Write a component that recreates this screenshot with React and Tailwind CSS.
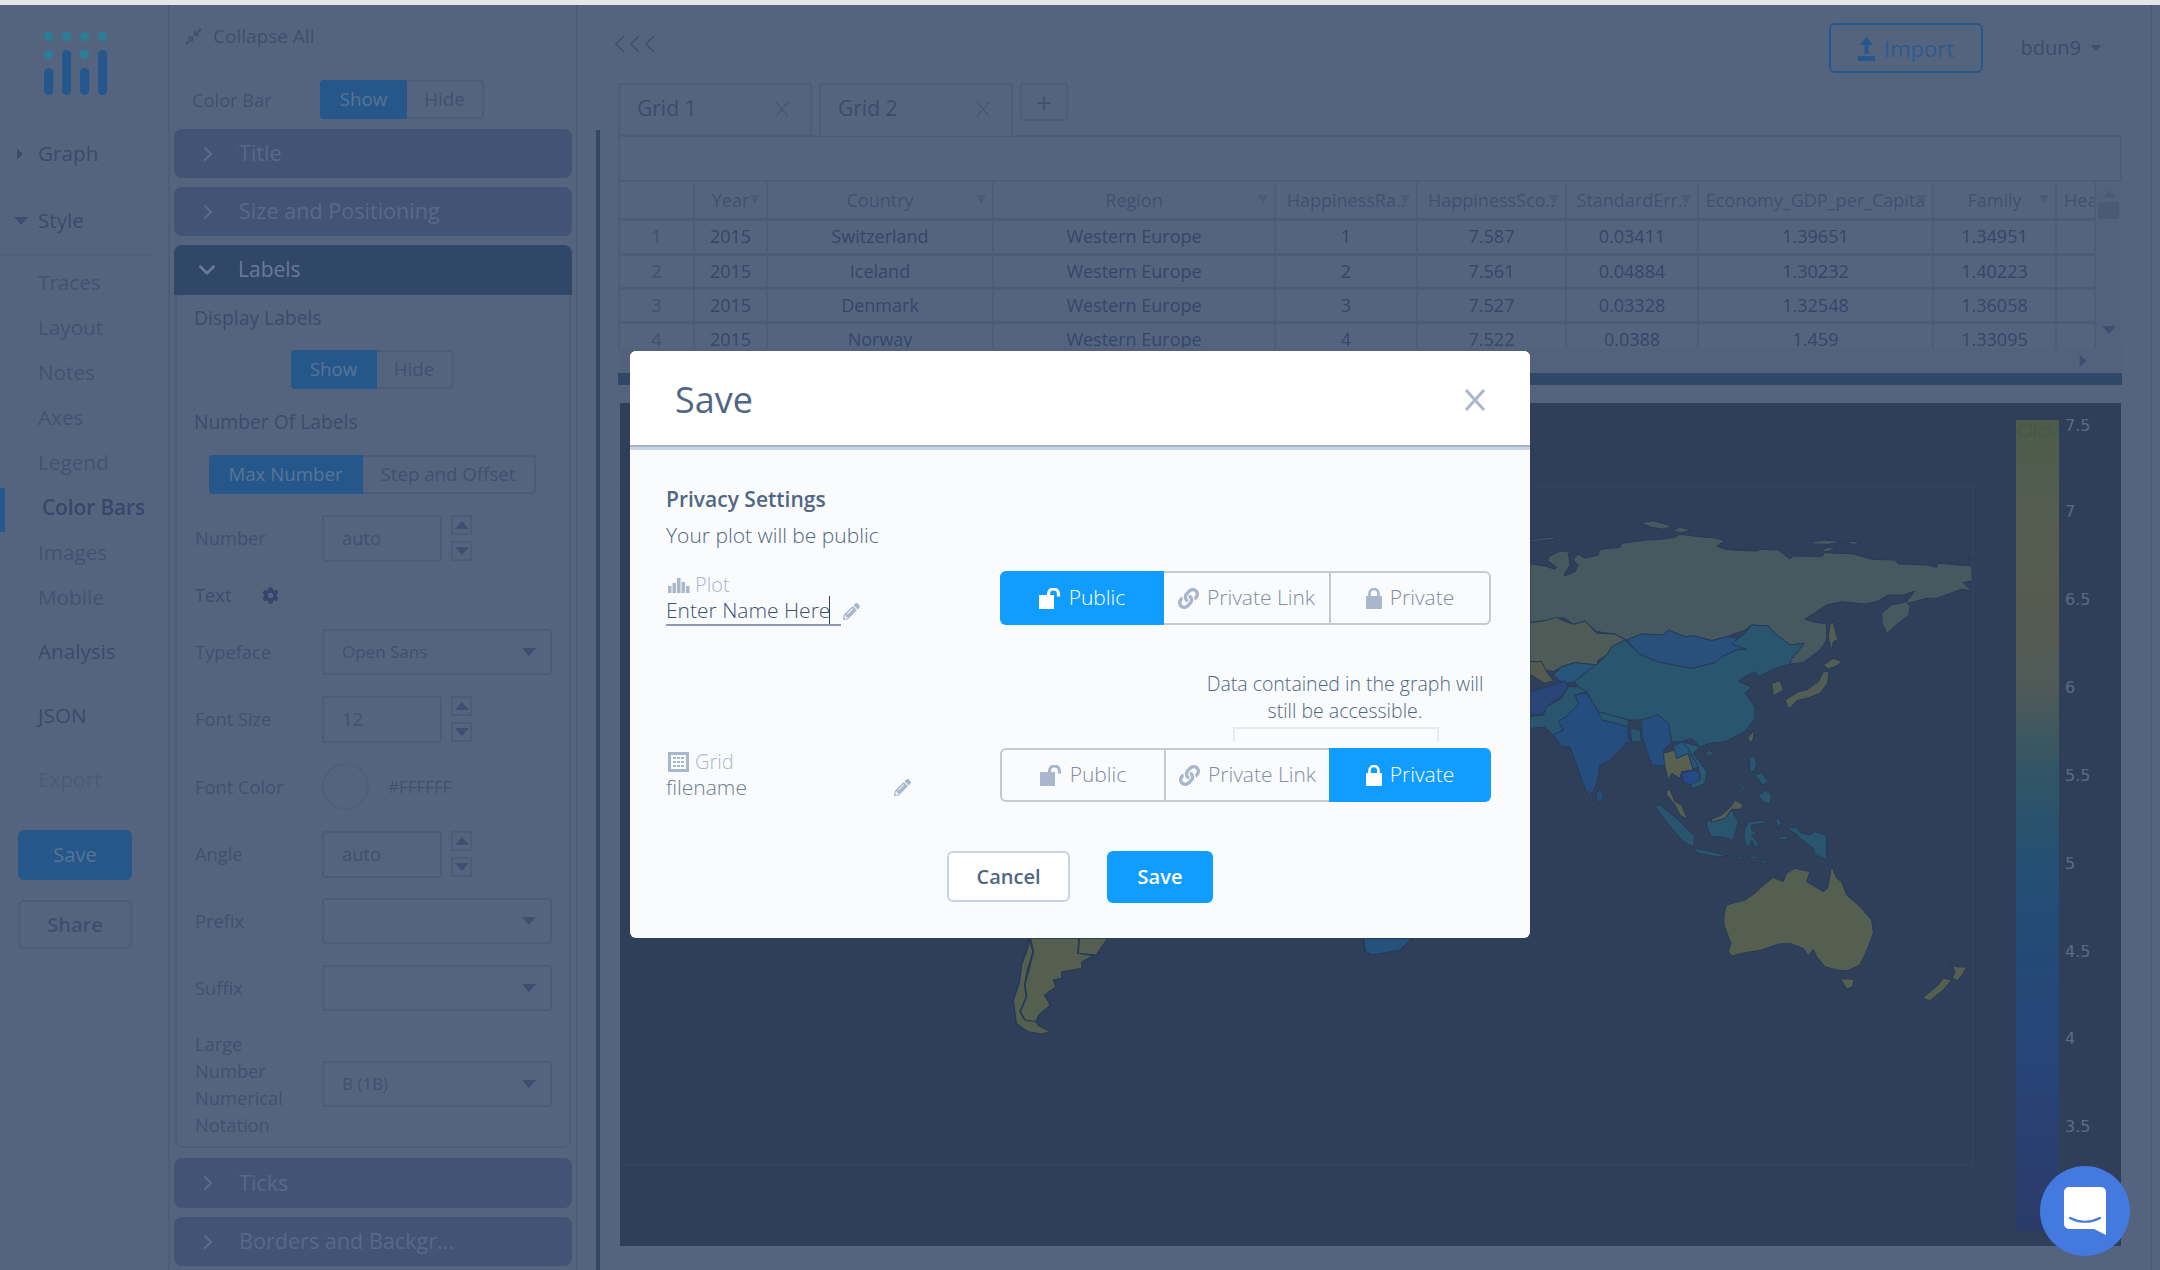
import React from "react";
import { ChevronRight, ChevronDown } from "lucide-react";
import { FaCog, FaLink, FaPencilAlt, FaCompressAlt } from "react-icons/fa";

// table data
const columns = ["", "Year", "Country", "Region", "HappinessRa..", "HappinessSco..", "StandardErr..", "Economy_GDP_per_Capita", "Family", "Hea"];
const rows = [
  ["1", "2015", "Switzerland", "Western Europe", "1", "7.587", "0.03411", "1.39651", "1.34951", ""],
  ["2", "2015", "Iceland", "Western Europe", "2", "7.561", "0.04884", "1.30232", "1.40223", ""],
  ["3", "2015", "Denmark", "Western Europe", "3", "7.527", "0.03328", "1.32548", "1.36058", ""],
  ["4", "2015", "Norway", "Western Europe", "4", "7.522", "0.0388", "1.459", "1.33095", ""],
];
const gridCols = "grid grid-cols-[75px_73px_226px_282px_142px_149px_132px_235px_123px_39px]";

const Caret = ({ dir = "down", className = "" }) => (
  <svg width="14" height="8" viewBox="0 0 14 8" preserveAspectRatio="none" className={className}>
    <path d={dir === "down" ? "M0 0h14L7 8z" : "M0 8h14L7 0z"} fill="currentColor" />
  </svg>
);

const Logo = () => (
  <svg width="64" height="64" viewBox="0 0 64 64">
    {[4.6, 22.6, 40.6, 58.6].map((x) => (
      <circle key={x} cx={x} cy="4.6" r="4.6" fill="#2a7f98" />
    ))}
    <circle cx="4.6" cy="22.6" r="4.6" fill="#2a7f98" />
    <circle cx="40.6" cy="22.6" r="4.6" fill="#2a7f98" />
    <rect x="0" y="36" width="9.2" height="27" rx="4.6" fill="#24578d" />
    <rect x="18" y="18" width="9.2" height="45" rx="4.6" fill="#24578d" />
    <rect x="36" y="36" width="9.2" height="27" rx="4.6" fill="#24578d" />
    <rect x="54" y="18" width="9.2" height="45" rx="4.6" fill="#24578d" />
  </svg>
);

const NavSub = ({ label, active }) => (
  <div className="relative flex h-[45px] items-center">
    {active && <div className="absolute left-0 top-[3px] h-[44px] w-[5px] bg-[#24578d]" />}
    <span className={active ? "pl-[42px] font-semibold text-[#34486a]" : "pl-[38px] text-[#425274]"}>{label}</span>
  </div>
);

const Sidebar = () => (
  <div className="w-[170px] shrink-0 border-r-2 border-[#4d5c79] text-[20.7px]">
    <div className="h-[116px] pl-[44px] pt-[27px]">
      <Logo />
    </div>
    <div className="flex h-[66px] items-center text-[#384b6d]">
      <Caret className="ml-[13px] mr-[11px] -rotate-90 scale-75 text-[#3a4d6e]" />
      Graph
    </div>
    <div className="flex h-[67px] items-center text-[#384b6d]">
      <Caret className="ml-[14px] mr-[10px] text-[#3a4d6e]" />
      Style
    </div>
    <div className="mb-[4px] h-[2px] w-[150px] bg-[#4f5e7b]" />
    {["Traces", "Layout", "Notes", "Axes", "Legend"].map((n) => (
      <NavSub key={n} label={n} />
    ))}
    <NavSub label="Color Bars" active />
    <NavSub label="Images" />
    <NavSub label="Mobile" />
    <div className="flex h-[64px] items-center pl-[38px] text-[#384b6d]">Analysis</div>
    <div className="flex h-[64px] items-center pl-[38px] text-[#384b6d]">JSON</div>
    <div className="flex h-[64px] items-center pl-[38px] text-[#4a5a78]">Export</div>
    <div className="ml-[18px] mt-[18px] flex h-[50px] w-[114px] items-center justify-center rounded-[6px] bg-[#25578a] text-[20px] text-[#5a7396]">Save</div>
    <div className="ml-[18px] mt-[20px] flex h-[49px] w-[114px] items-center justify-center rounded-[6px] border-2 border-[#4c5b79] text-[20px] font-semibold text-[#3d4f70]">Share</div>
  </div>
);

const Toggle = ({ options, activeIdx = 0, widths }) => (
  <div className="flex h-[39px] text-[18.7px]">
    {options.map((o, i) => (
      <div
        key={o}
        className={
          i === activeIdx
            ? "flex items-center justify-center rounded-l-[4px] bg-[#25578a] text-[#5a7396]"
            : "flex items-center justify-center rounded-r-[4px] border-2 border-l-0 border-[#4c5b79] text-[#3f5072]"
        }
        style={{ width: widths[i] }}
      >
        {o}
      </div>
    ))}
  </div>
);

const Bar = ({ label, className = "" }) => (
  <div className={`flex items-center rounded-[8px] bg-[#415475] text-[21.6px] text-[#586988] ${className}`}>
    <ChevronRight size={24} strokeWidth={2} className="ml-[22px] mr-[19px] text-[#5c6d8a]" />
    {label}
  </div>
);

const Row = ({ h, label, children }) => (
  <div className={`flex items-center border-b border-[#51607c] ${h}`}>
    <div className="w-[145px] shrink-0 pl-[18px] text-[#3f5072]">{label}</div>
    {children}
  </div>
);

const NumberInput = ({ value }) => (
  <>
    <div className="flex h-[47px] w-[120px] items-center rounded-[3px] border-2 border-[#4c5b79] pl-[18px] text-[#3f5072]">{value}</div>
    <div className="ml-[9px] flex flex-col gap-[6px]">
      <div className="flex h-[20px] w-[21px] items-center justify-center border-2 border-[#4c5b79] text-[#3d4f70]">
        <Caret dir="up" />
      </div>
      <div className="flex h-[20px] w-[21px] items-center justify-center border-2 border-[#4c5b79] text-[#3d4f70]">
        <Caret />
      </div>
    </div>
  </>
);

const Select = ({ value }) => (
  <div className="flex h-[46px] w-[230px] items-center justify-between rounded-[4px] border-2 border-[#4c5b79] pl-[18px] pr-[14px] text-[17px] text-[#3f5072]">
    <span>{value}</span>
    <Caret className="text-[#3d4f70]" />
  </div>
);

const StylePanel = () => (
  <div className="h-[1265px] w-[408px] shrink-0 overflow-hidden border-r-2 border-[#4d5c79] pl-[4px] pr-[4px] text-[18.3px]">
    <div className="flex h-[62px] items-center pl-[10px] text-[#3d4f70]">
      <FaCompressAlt size={19} className="mr-[10px] text-[#435374]" />
      <span className="text-[19px]">Collapse All</span>
    </div>
    <div className="mt-[13px] flex h-[39px] items-center">
      <span className="w-[146px] pl-[18px] text-[#3f5072]">Color Bar</span>
      <Toggle options={["Show", "Hide"]} widths={[87, 77]} />
    </div>
    <Bar label="Title" className="mt-[10px] h-[49px]" />
    <Bar label="Size and Positioning" className="mt-[9px] h-[49px]" />
    <div className="mt-[9px] flex h-[50px] items-center rounded-t-[8px] bg-[#314768] text-[21px] text-[#687a98]">
      <ChevronDown size={26} strokeWidth={2.5} className="ml-[20px] mr-[18px] text-[#687a98]" />
      Labels
    </div>
    <div className="ml-[1px] mr-[1px] h-[853px] rounded-b-[8px] border-x-2 border-b-2 border-[#4d5c79]">
      <div className="flex h-[46px] items-center pl-[17px] text-[19.3px] text-[#3a4c6e]">Display Labels</div>
      <div className="mt-[9px] flex justify-center pr-[2px]">
        <Toggle options={["Show", "Hide"]} widths={[86, 77]} />
      </div>
      <div className="mt-[11px] flex h-[44px] items-center pl-[17px] text-[19.3px] text-[#3a4c6e]">Number Of Labels</div>
      <div className="mt-[11px] flex justify-center pr-[2px]">
        <Toggle options={["Max Number", "Step and Offset"]} widths={[154, 173]} />
      </div>
      <div className="mt-[12px]">
        <Row h="h-[65px]" label="Number"><NumberInput value="auto" /></Row>
        <div className="flex h-[48px] items-center pl-[18px] text-[#3a4c6e]">
          Text
          <FaCog size={17} className="ml-[31px] text-[#34466a]" />
        </div>
        <Row h="h-[67px]" label="Typeface"><Select value="Open Sans" /></Row>
        <Row h="h-[67px]" label="Font Size"><NumberInput value="12" /></Row>
        <Row h="h-[68px]" label="Font Color">
          <div className="h-[47px] w-[47px] rounded-full border-2 border-[#4f5e7b]" />
          <span className="ml-[19px] text-[17px] text-[#3f5072]">#FFFFFF</span>
        </Row>
        <Row h="h-[67px]" label="Angle"><NumberInput value="auto" /></Row>
        <Row h="h-[67px]" label="Prefix"><Select value="" /></Row>
        <Row h="h-[66px]" label="Suffix"><Select value="" /></Row>
        <div className="flex h-[125px] items-center text-[#3f5072]">
          <div className="w-[145px] shrink-0 pl-[18px] leading-[27px]">
            Large
            <br />
            Number
            <br />
            Numerical
            <br />
            Notation
          </div>
          <Select value="B (1B)" />
        </div>
      </div>
    </div>
    <Bar label="Ticks" className="mt-[10px] h-[50px]" />
    <Bar label="Borders and Backgr..." className="mt-[9px] h-[49px]" />
  </div>
);

const Tab = ({ label, active }) => (
  <div className={`mr-[7px] flex h-[53px] w-[194px] items-center justify-between rounded-t-[3px] border-2 border-[#4d5c79] pb-[2px] pl-[17px] pr-[21px] text-[21px] text-[#3a4c6e] ${active ? "border-b-[#55647e]" : ""}`}>
    <span>{label}</span>
    <svg width="14" height="16" viewBox="0 0 14 16" stroke="#47577a" strokeWidth="1.6" fill="none">
      <path d="M1 1l12 14M13 1L1 15" />
    </svg>
  </div>
);

const DataTable = () => (
  <div className="flex h-[166px] border-l-2 border-[#4d5c79] text-[18px] text-[#34466a]">
    <div className="h-full w-[1476px] overflow-hidden">
      <div className={`${gridCols} h-[39px] border-b-[3px] border-[#4c5b78]`}>
        {columns.map((c, i) => (
          <div key={i} className={`relative flex items-center overflow-hidden whitespace-nowrap border-r-2 border-[#4d5c79] text-[#3f5072] ${i === 9 ? "justify-start pl-[7px]" : "justify-center"}`}>
            {c}
            {i > 0 && i < 9 && <Caret className="absolute right-[6px] top-[13px] h-[9px] w-[10px] text-[#4a5a78]" />}
          </div>
        ))}
      </div>
      {rows.map((r, ri) => (
        <div key={r[0]} className={`${gridCols} ${ri === 0 ? "h-[35px] pb-[1px]" : "h-[34px]"} border-b-[3px] border-[#4c5b78]`}>
          {r.map((v, i) => (
            <div key={i} className={`flex items-center justify-center whitespace-nowrap border-r-2 border-[#4d5c79] ${i === 0 ? "text-[#3f5072]" : ""}`}>
              {v}
            </div>
          ))}
        </div>
      ))}
    </div>
    <div className="flex w-[25px] flex-col items-center bg-[#53627c] text-[#3d4f70]">
      <Caret dir="up" className="mt-[8px] text-[#4a5a78]" />
      <div className="mt-[4px] h-[17px] w-[21px] bg-[#4a5a75]" />
      <Caret className="mt-[107px]" />
    </div>
  </div>
);

// land shapes traced in crop coordinates, 3 units = 1 page pixel
const RUSSIA = "#47595f", KAZ = "#4f5b56", TEAL = "#29566e", BLUE = "#254e7e", OLIVE = "#555f50";

const asia = [
  [RUSSIA, "M15,222 L60,228 L90,238 L95,232 L68,212 L72,200 L105,183 L130,186 L140,195 L155,190 L165,195 L180,205 L220,195 L225,178 L285,172 L290,160 L365,150 L410,148 L450,142 L465,133 L520,140 L565,143 L600,152 L575,168 L600,178 L655,182 L700,183 L705,178 L760,180 L795,207 L805,198 L890,200 L900,188 L985,192 L1040,208 L1110,210 L1120,222 L1205,225 L1235,232 L1240,220 L1340,228 L1342,272 L1315,278 L1340,303 L1310,298 L1235,325 L1205,325 L1150,340 L1145,335 L1170,303 L1135,315 L1090,315 L1055,335 L1020,342 L950,335 L905,345 L840,388 L860,395 L905,402 L905,450 L885,480 L835,517 L795,522 L798,510 L838,460 L795,465 L750,430 L730,408 L680,405 L660,420 L605,440 L560,452 L510,438 L480,440 L430,420 L415,435 L350,432 L305,450 L270,432 L215,425 L180,393 L145,403 L115,382 L60,392 L15,398 Z"],
  [RUSSIA, "M1070,370 L1100,345 L1145,335 L1155,350 L1152,375 L1125,395 L1085,430 L1072,400 Z"],
  ["#2f3f5a", "M118,258 L150,245 L160,225 L145,210 L160,190 L130,190 L135,225 L120,250 Z"],
  [RUSSIA, "M345,98 L385,92 L440,108 L420,118 L380,112 Z"],
  [RUSSIA, "M440,122 L465,112 L500,120 L470,128 Z"],
  [RUSSIA, "M15,150 L90,140 L85,148 L15,155 Z"],
  [RUSSIA, "M860,155 L900,150 L950,155 L910,163 L870,162 Z"],
  [RUSSIA, "M960,157 L985,154 L1012,160 L985,163 Z"],
  [RUSSIA, "M890,180 L910,172 L935,180 L900,185 Z"],
  [RUSSIA, "M1330,205 L1345,200 L1345,208 Z"],
  [KAZ, "M15,398 L60,392 L95,382 L115,392 L145,403 L180,393 L215,430 L270,432 L300,450 L260,470 L245,495 L220,510 L215,525 L150,518 L110,530 L85,545 L60,540 L50,515 L15,515 Z"],
  ["#545c50", "M15,515 L50,515 L65,545 L85,572 L60,580 L15,553 Z"],
  ["#27567a", "M85,555 L110,530 L150,518 L215,525 L185,545 L150,575 L125,580 L100,570 Z"],
  ["#2a4678", "M15,605 L70,590 L120,572 L130,590 L100,625 L65,650 L55,672 L15,675 Z"],
  [TEAL, "M15,680 L55,675 L65,650 L110,625 L130,590 L160,590 L185,605 L150,615 L160,640 L130,675 L100,695 L115,720 L85,735 L60,712 L15,715 Z"],
  [TEAL, "M150,575 L185,545 L220,520 L245,495 L260,470 L300,450 L340,490 L395,515 L500,535 L570,518 L590,500 L640,478 L665,478 L620,462 L640,445 L660,430 L680,405 L730,408 L750,430 L795,465 L838,460 L798,510 L795,522 L750,535 L700,560 L690,545 L650,565 L640,575 L680,590 L660,610 L690,650 L690,685 L660,725 L600,755 L555,760 L525,770 L500,745 L470,755 L440,755 L430,700 L400,675 L355,690 L310,690 L220,665 L205,640 L185,605 L160,590 Z"],
  ["#28507a", "M305,450 L350,432 L415,435 L430,420 L480,440 L510,438 L560,452 L605,440 L640,445 L620,462 L665,478 L640,478 L590,500 L570,518 L500,535 L395,515 L340,490 Z"],
  [BLUE, "M150,615 L185,610 L205,640 L220,665 L230,680 L310,710 L310,750 L340,755 L350,730 L360,745 L300,760 L295,770 L255,810 L225,825 L215,880 L205,905 L190,915 L180,895 L135,770 L110,770 L85,735 L115,720 L100,695 L130,675 L160,640 Z"],
  [TEAL, "M220,665 L310,690 L310,710 L230,690 Z"],
  [TEAL, "M315,715 L345,720 L350,755 L320,755 Z"],
  [BLUE, "M350,690 L400,675 L430,700 L440,755 L415,780 L425,830 L380,825 L360,765 L350,730 Z"],
  ["#58604f", "M415,790 L450,780 L455,805 L490,790 L505,840 L470,845 L465,865 L440,850 L430,870 L420,830 Z"],
  ["#27567a", "M445,770 L470,755 L490,775 L520,830 L505,838 L490,790 L455,805 Z"],
  ["#2a5a72", "M470,755 L525,770 L505,790 L545,845 L540,880 L500,898 L498,880 L525,865 L520,830 L490,775 Z"],
  ["#254a85", "M470,850 L505,840 L525,850 L525,870 L495,885 L475,875 Z"],
  [TEAL, "M540,790 L552,780 L566,788 L552,800 Z"],
  [OLIVE, "M675,735 L688,722 L685,745 L678,760 L668,745 Z"],
  ["#525d53", "M740,580 L765,572 L775,600 L745,618 Z"],
  ["#525d53", "M780,630 L820,605 L845,600 L880,575 L895,545 L912,545 L908,580 L885,610 L845,625 L815,632 L800,650 L790,655 Z"],
  ["#525d53", "M895,525 L925,505 L952,515 L930,530 L910,537 Z"],
  ["#525d53", "M915,405 L925,395 L938,450 L925,455 L920,485 L910,440 Z"],
];

const oceania = [
  [BLUE, "M214,165 L225,145 L236,170 L228,187 L216,185 Z"],
  [TEAL, "M672,52 L688,48 L695,70 L688,95 L675,95 Z"],
  [TEAL, "M700,165 L725,150 L740,165 L735,190 L715,188 Z"],
  [TEAL, "M690,105 L710,98 L730,125 L712,135 Z"],
  [TEAL, "M638,160 L662,128 L660,140 L645,160 Z"],
  [OLIVE, "M425,150 L435,150 L450,185 L470,195 L487,238 L465,225 L450,195 L425,165 Z"],
  [TEAL, "M388,195 L405,195 L460,240 L510,290 L505,322 L470,300 L420,240 Z"],
  [TEAL, "M505,325 L540,330 L615,350 L575,350 L520,340 Z"],
  [TEAL, "M630,350 L655,348 L645,358 Z"],
  [TEAL, "M660,352 L700,347 L690,357 Z"],
  [TEAL, "M655,362 L678,368 L668,372 Z"],
  [TEAL, "M705,368 L725,357 L718,372 Z"],
  [TEAL, "M545,240 L560,245 L600,235 L620,210 L640,245 L625,300 L595,292 L560,290 L545,260 Z"],
  [OLIVE, "M555,240 L590,225 L618,200 L630,180 L655,195 L645,208 L620,208 L600,235 L565,245 Z"],
  [TEAL, "M660,265 L670,245 L725,240 L715,250 L680,255 L680,270 L700,285 L680,285 L703,315 L690,320 L680,300 L672,318 L662,318 L657,285 Z"],
  [TEAL, "M752,240 L762,232 L768,250 L758,265 Z"],
  [TEAL, "M785,265 L815,262 L828,280 L855,285 L870,275 L905,285 L905,358 L870,345 L865,325 L825,295 L815,283 Z"],
  [TEAL, "M735,292 L750,290 L748,298 Z"],
  [TEAL, "M755,292 L785,288 L790,298 L760,298 Z"],
  [TEAL, "M825,325 L835,318 L832,335 Z"],
  [OLIVE, "M597,525 L605,495 L660,480 L690,460 L710,440 L745,412 L775,425 L785,400 L810,385 L855,395 L845,425 L895,455 L908,445 L920,378 L935,415 L950,425 L965,465 L1000,495 L1040,540 L1045,580 L1030,620 L1005,675 L965,693 L935,690 L900,680 L875,650 L865,628 L850,648 L835,625 L795,610 L760,612 L710,630 L650,640 L620,648 L610,635 L618,610 L597,555 Z"],
  [OLIVE, "M947,716 L988,718 L983,740 L965,748 Z"],
  [OLIVE, "M1192,775 L1240,735 L1255,715 L1280,720 L1255,750 L1215,782 Z"],
  [OLIVE, "M1260,645 L1290,680 L1325,682 L1315,700 L1298,722 L1282,715 L1290,695 L1282,675 Z"],
];

const southAmerica = [
  [OLIVE, "M715,55 L800,55 L798,100 L825,108 L805,125 L805,145 L770,155 L770,175 L755,180 L760,200 L740,225 L750,255 L730,285 L725,305 L705,300 L697,275 L708,230 L705,195 L712,150 L720,95 Z"],
  [OLIVE, "M712,55 L720,95 L710,150 L705,195 L708,230 L697,275 L705,300 L725,305 L730,318 L750,335 L735,342 L710,335 L690,310 L685,240 L695,190 L700,130 L710,85 Z"],
  [OLIVE, "M800,55 L850,55 L830,105 L798,100 Z"],
  ["#25527a", "M1295,55 L1380,55 L1360,90 L1310,105 L1298,95 Z"],
];

const ticks = [["7.5", 431], ["7", 517], ["6.5", 605], ["6", 693], ["5.5", 781], ["5", 869], ["4.5", 957], ["4", 1044], ["3.5", 1132]];

const MapPlot = () => (
  <div className="ml-[2px] mt-[18px] h-[843px] w-[1501px] bg-[#2f3f5a]">
    <svg width="1501" height="843" viewBox="620 403 1501 843">
      <defs>
        <linearGradient id="cbar" x1="0" y1="0" x2="0" y2="1">
          <stop offset="0" stopColor="#4c5c4a" />
          <stop offset="0.11" stopColor="#535d50" />
          <stop offset="0.22" stopColor="#565b50" />
          <stop offset="0.33" stopColor="#4f5a58" />
          <stop offset="0.44" stopColor="#2f5566" />
          <stop offset="0.55" stopColor="#254f74" />
          <stop offset="0.66" stopColor="#244977" />
          <stop offset="0.77" stopColor="#26467a" />
          <stop offset="0.88" stopColor="#2a3f72" />
          <stop offset="1" stopColor="#2a3b68" />
        </linearGradient>
      </defs>
      <rect x="600" y="486" width="1373" height="679" fill="none" stroke="#344563" />
      <g transform="translate(1525 490) scale(0.3333)" stroke="#263a58" strokeWidth="3" strokeLinejoin="round">
        {asia.map(([fill, d], i) => <path key={i} d={d} fill={fill} />)}
      </g>
      <g transform="translate(1525 740) scale(0.3333)" stroke="#263a58" strokeWidth="3" strokeLinejoin="round">
        {oceania.map(([fill, d], i) => <path key={i} d={d} fill={fill} />)}
      </g>
      <g transform="translate(620 920) scale(0.574 0.3333)" stroke="#263a58" strokeWidth="3" strokeLinejoin="round">
        {southAmerica.map(([fill, d], i) => <path key={i} d={d} fill={fill} />)}
      </g>
      <rect x="2016" y="420" width="43" height="811" fill="url(#cbar)" />
      <text x="2017" y="437" fontFamily="Open Sans" fontSize="18" fill="#475848">Click</text>
      {ticks.map(([t, y]) => (
        <text key={t} x="2065" y={y} fontFamily="DejaVu Sans" fontSize="16" fill="#5c6b85">{t}</text>
      ))}
    </svg>
  </div>
);

const MainArea = () => (
  <div className="relative min-w-0 flex-1 pl-[40px] pr-[28px]">
    {/* splitter handle beside the grid */}
    <div className="absolute left-[18px] top-[125px] h-[1140px] w-[4px] bg-[#314768]" />
    <div className="flex h-[78px] items-center justify-between">
      <svg width="40" height="18" viewBox="0 0 40 18" fill="none" stroke="#3f5072" strokeWidth="1.6" className="-ml-[3px]">
        <path d="M9 1L1 9l8 8M24 1l-8 8 8 8M39 1l-8 8 8 8" />
      </svg>
      <div className="mt-[8px] flex items-center text-[22px]">
        <div className="flex h-[50px] w-[154px] items-center justify-center rounded-[6px] border-2 border-[#25578a] text-[#2d5a8e]">
          <svg width="19" height="26" viewBox="0 0 19 26" className="mr-[8px] mt-[2px] text-[#25578a]" fill="currentColor">
            <path d="M9.5 1L16 9h-4.5v9h-4V9H3zM1 20h17v5H1z" />
          </svg>
          Import
        </div>
        <span className="ml-[38px] text-[20px] text-[#3a4c6e]">bdun9</span>
        <Caret className="ml-[8px] mr-[19px] scale-75 text-[#3d4f70]" />
      </div>
    </div>
    <div className="flex h-[54px] items-start border-b-2 border-[#4d5c79]">
      <Tab label="Grid 1" />
      <Tab label="Grid 2" active />
      <div className="flex h-[38px] w-[48px] items-center justify-center rounded-[3px] border-2 border-[#4d5c79] text-[28px] text-[#3f5072]">+</div>
    </div>
    <div className="h-[45px] border-x-2 border-b-2 border-[#4d5c79]" />
    <DataTable />
    <div className="flex h-[25px] items-center justify-end bg-[#53627c] pr-[32px] text-[#3d4f70]">
      <Caret className="-rotate-90 scale-90" />
    </div>
    <div className="h-[12px] bg-[#314768]" />
    <MapPlot />
  </div>
);

const UnlockIcon = ({ className }) => (
  <svg width="22" height="21" viewBox="0 0 22 21" className={className} fill="none">
    <rect x="0" y="7" width="15" height="14" fill="currentColor" />
    <path d="M9.5 7V6a5 5 0 0 1 10 0v2.5" stroke="currentColor" strokeWidth="3.2" />
  </svg>
);

const LockIcon = ({ className }) => (
  <svg width="16" height="21" viewBox="0 0 16 21" className={className} fill="none">
    <rect x="0" y="8" width="16" height="13" rx="1" fill="currentColor" />
    <path d="M3.5 9V5.5a4.5 4.5 0 0 1 9 0V9" stroke="currentColor" strokeWidth="2.6" />
  </svg>
);

const PrivacyToggle = ({ active }) => {
  const items = [
    { label: "Public", w: "w-[164px]", icon: (c) => <UnlockIcon className={c} /> },
    { label: "Private Link", w: "w-[165px]", icon: (c) => <FaLink size={21} className={c} /> },
    { label: "Private", w: "w-[162px]", icon: (c) => <LockIcon className={c} /> },
  ];
  return (
    <div className="flex h-[54px] text-[21px] font-light">
      {items.map((it, i) => {
        const on = i === active;
        const round = i === 0 ? "rounded-l-[6px]" : i === 2 ? "rounded-r-[6px]" : "";
        const edges = on ? "bg-[#119dff] text-white" : `border-y-2 border-[#c8c9cc] text-[#7f8da5] ${i === 0 ? "border-l-2" : ""} ${i === 2 ? "border-r-2" : ""} ${i === 1 && active === 2 ? "border-l-2" : ""} ${i === 2 && active === 0 ? "border-l-2" : ""}`;
        return (
          <div key={it.label} className={`flex items-center justify-center gap-[8px] ${it.w} ${round} ${edges}`}>
            {it.icon(on ? "text-white" : "text-[#a9b7cd]")}
            {it.label}
          </div>
        );
      })}
    </div>
  );
};

const SaveModal = () => (
  <div className="absolute left-[630px] top-[351px] h-[587px] w-[900px] overflow-hidden rounded-[6px] bg-[#fafbfd]">
    <div className="flex h-[96px] items-center justify-between border-b-2 border-[#a9b5c6] bg-white pl-[45px] pr-[44px] pt-[4px]">
      <span className="text-[36px] text-[#506784]">Save</span>
      <svg width="22" height="22" viewBox="0 0 22 22" fill="none" stroke="#a9b8cd" strokeWidth="3">
        <path d="M2 1l18 20M20 1L2 21" />
      </svg>
    </div>
    <div className="h-[3px] bg-[#c8d4e4]" />
    <div className="px-[36px] pt-[36px] text-[21px] text-[#506784]">
      <div className="flex h-[28px] items-center font-semibold">Privacy Settings</div>
      <div className="mt-[8px] flex h-[28px] items-center font-light">Your plot will be public</div>
      <div className="mt-[21px] flex justify-between pr-[3px]">
        <div className="pt-[2px]">
          <div className="flex h-[24px] items-center text-[20px] font-light text-[#a9b7cd]">
            <svg width="22" height="15" viewBox="0 0 22 15" fill="currentColor" className="ml-[2px] mr-[5px]">
              <path d="M0 8h3.500v7H0zM4.500 5h3.500v10h-3.500zM9 0h3.500v15H9zM13.500 4h3.500v11h-3.500zM18 8h3.500v7H18z" />
            </svg>
            Plot
          </div>
          <div className="flex items-center">
            <div className="relative flex h-[29px] w-[175px] items-center whitespace-nowrap border-b-2 border-[#8c99b0] font-light text-[#3f5272]">
              Enter Name Here
              <div className="absolute left-[163px] top-[-1px] h-[28px] w-px bg-[#2f3f5a]" />
            </div>
            <FaPencilAlt size={17} className="ml-[2px] text-[#a9b7cd]" />
          </div>
        </div>
        <PrivacyToggle active={0} />
      </div>
      <div className="ml-[401px] mt-[44px] w-[556px] text-center text-[19.5px] font-light leading-[27px] text-[#506784]">
        <div className="mx-auto w-[300px]">Data contained in the graph will still be accessible.</div>
      </div>
      <div className="ml-[567px] mt-[3px] h-[15px] w-[206px] border-x-2 border-t-2 border-[#e8eaed]" />
      <div className="mt-[6px] flex justify-between pr-[3px]">
        <div className="pt-[2px]">
          <div className="flex h-[24px] items-center text-[20px] font-light text-[#a9b7cd]">
            <svg width="22" height="20" viewBox="0 0 22 20" fill="currentColor" className="ml-[2px] mr-[5px]">
              <path fillRule="evenodd" d="M0 0h21v20H0zM3 3v14h15V3z" />
              <path d="M5 5h3v2H5zM9 5h3v2H9zM13 5h3v2h-3zM5 9h3v2H5zM9 9h3v2H9zM13 9h3v2h-3zM5 13h3v2H5zM9 13h3v2H9zM13 13h3v2h-3z" />
            </svg>
            Grid
          </div>
          <div className="flex h-[27px] w-[245px] items-center justify-between font-light text-[#6f7d92]">
            filename
            <FaPencilAlt size={17} className="text-[#a9b7cd]" />
          </div>
        </div>
        <PrivacyToggle active={2} />
      </div>
      <div className="mt-[49px] flex justify-start pl-[281px] text-[20px] font-semibold">
        <div className="flex h-[51px] w-[123px] items-center justify-center rounded-[6px] border-2 border-[#c8d4e4] bg-white text-[#506784]">Cancel</div>
        <div className="ml-[37px] flex h-[52px] w-[106px] items-center justify-center rounded-[6px] bg-[#119dff] text-white">Save</div>
      </div>
    </div>
  </div>
);

const ChatBubble = () => (
  <div className="absolute bottom-[14px] right-[30px] flex h-[90px] w-[90px] items-center justify-center rounded-full bg-[#4479e0]">
    <svg width="42" height="48" viewBox="0 0 42 48">
      <path d="M5 0h32a5 5 0 0 1 5 5v43l-12-6H5a5 5 0 0 1-5-5V5a5 5 0 0 1 5-5z" fill="#fff" />
      <path d="M6 31c10 5 20 5 30 0" fill="none" stroke="#4479e0" strokeWidth="2.2" strokeLinecap="round" />
    </svg>
  </div>
);

const App = () => (
  <div className="relative h-[1270px] w-[2160px] overflow-hidden bg-[#55647e] font-['Open_Sans',sans-serif]">
    <div className="h-[5px] bg-[#e6e6e6]" />
    <div className="flex h-[1265px]">
      <Sidebar />
      <StylePanel />
      <MainArea />
      <div className="w-[10px] shrink-0 border-l-2 border-[#4d5c79]" />
    </div>
    <SaveModal />
    <ChatBubble />
  </div>
);

export default App;
